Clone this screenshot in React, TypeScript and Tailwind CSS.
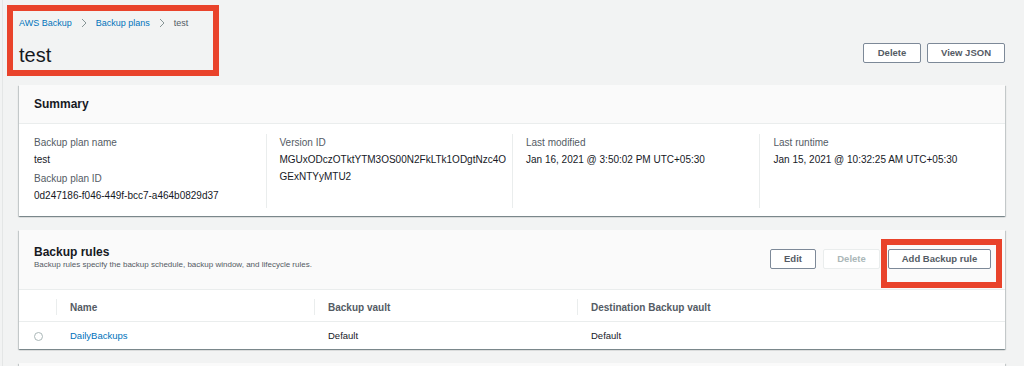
import { ReactNode } from 'react'

const cardShadow =
  'shadow-[0_1px_1px_0_rgba(0,28,36,0.3),1px_1px_1px_0_rgba(0,28,36,0.15),-1px_1px_1px_0_rgba(0,28,36,0.15)]'

function Btn({ children, disabled, className = '' }: { children: ReactNode; disabled?: boolean; className?: string }) {
  return (
    <button
      className={
        'h-[20px] rounded-[2px] border bg-white text-[9.5px] font-bold leading-none ' +
        (disabled ? 'border-[#eaeded] text-[#aab7b8] ' : 'border-[#7d8998] text-[#545b64] ') +
        className
      }
    >
      {children}
    </button>
  )
}

function Chevron() {
  return (
    <svg width="6" height="10" viewBox="0 0 6 10" className="mx-[9px]">
      <path d="M1 1l4 4-4 4" fill="none" stroke="#879596" strokeWidth="1" />
    </svg>
  )
}

function Field({ label, value }: { label: string; value: ReactNode }) {
  return (
    <div className="mb-[5px]">
      <div className="text-[10px] leading-[14px] text-[#545b64]">{label}</div>
      <div className="mt-[3px] text-[10px] leading-[14px] text-[#16191f]">{value}</div>
    </div>
  )
}

export default function App() {
  return (
    <div className="relative h-screen overflow-hidden bg-[#f2f3f3] font-['Liberation_Sans',Arial,sans-serif]">
      <div className="ml-[2px] min-h-screen border-l border-[#e4e6e6] pl-[16px] pr-[19px]">
        {/* page header */}
        <div className="flex items-start justify-between">
          <div>
            <nav className="mt-[17px] flex h-[12px] items-center text-[9px] leading-[12px]">
              <span className="text-[#0073bb]">AWS Backup</span>
              <Chevron />
              <span className="text-[#0073bb]">Backup plans</span>
              <Chevron />
              <span className="text-[#545b64]">test</span>
            </nav>
            <h1 className="mt-[14px] text-[20px] leading-[24px] text-[#16191f]">test</h1>
          </div>
          <div className="mt-[43px] flex gap-[6px]">
            <Btn className="w-[58px]">Delete</Btn>
            <Btn className="w-[78px]">View JSON</Btn>
          </div>
        </div>

        {/* summary */}
        <section className={'mt-[18px] bg-white ' + cardShadow}>
          <div className="flex h-[39px] items-center border-b border-[#eaeded] bg-[#fafafa] px-[15px]">
            <h2 className="text-[12px] font-bold text-[#16191f]">Summary</h2>
          </div>
          <div className="grid h-[92px] grid-cols-4 pt-[10px] pb-[14px]">
            <div className="pl-[15px] pt-[2px]">
              <Field label="Backup plan name" value="test" />
              <Field label="Backup plan ID" value="0d247186-f046-449f-bcc7-a464b0829d37" />
            </div>
            <div className="border-l border-[#eaeded] pl-[13px] pt-[2px]">
              <Field
                label="Version ID"
                value={
                  <>
                    <span className="block">MGUxODczOTktYTM3OS00N2FkLTk1ODgtNzc4O</span>
                    <span className="mt-[3px] block">GExNTYyMTU2</span>
                  </>
                }
              />
            </div>
            <div className="border-l border-[#eaeded] pl-[13px] pt-[2px]">
              <Field label="Last modified" value="Jan 16, 2021 @ 3:50:02 PM UTC+05:30" />
            </div>
            <div className="border-l border-[#eaeded] pl-[14px] pt-[2px]">
              <Field label="Last runtime" value="Jan 15, 2021 @ 10:32:25 AM UTC+05:30" />
            </div>
          </div>
        </section>

        {/* backup rules */}
        <section className={'mt-[14px] bg-white ' + cardShadow}>
          <div className="flex h-[60px] items-start justify-between border-b border-[#eaeded] bg-[#fafafa] pl-[15px] pr-[14px]">
            <div className="pt-[14px]">
              <h2 className="text-[12px] font-bold leading-[16px] text-[#16191f]">Backup rules</h2>
              <p className="-mt-[1px] text-[8px] leading-[11px] text-[#545b64]">
                Backup rules specify the backup schedule, backup window, and lifecycle rules.
              </p>
            </div>
            <div className="mt-[19px] flex gap-[7px]">
              <Btn className="w-[46px]">Edit</Btn>
              <Btn disabled className="w-[57px]">Delete</Btn>
              <Btn className="ml-[1px] w-[103px]">Add Backup rule</Btn>
            </div>
          </div>
          <div className="grid h-[32px] grid-cols-[37px_258px_263px_1fr] items-center border-b border-[#eaeded] pt-[3px] text-[10px] font-bold text-[#545b64]">
            <div />
            <div className="flex h-[16px] items-center border-l border-[#eaeded] pl-[13px]">Name</div>
            <div className="flex h-[16px] items-center border-l border-[#eaeded] pl-[13px]">Backup vault</div>
            <div className="flex h-[16px] items-center border-l border-[#eaeded] pl-[13px]">Destination Backup vault</div>
          </div>
          <div className="grid h-[27px] grid-cols-[37px_258px_263px_1fr] items-center pt-[2px] text-[9.5px] text-[#16191f]">
            <div className="flex justify-center pl-[2px]">
              <span className="block h-[9px] w-[9px] rounded-full border border-[#aab7b8] bg-white" />
            </div>
            <div className="pl-[14px] text-[#0073bb]">DailyBackups</div>
            <div className="pl-[14px]">Default</div>
            <div className="pl-[14px]">Default</div>
          </div>
        </section>

        {/* next card peeking */}
        <section className={'mt-[14px] h-[30px] bg-[#fafafa] ' + cardShadow} />
      </div>

      {/* annotation boxes */}
      <div className="pointer-events-none absolute left-[7px] top-[5px] h-[71px] w-[212px] border-[6px] border-[#e9432b]" />
      <div className="pointer-events-none absolute left-[881px] top-[239px] h-[49px] w-[121px] border-[6px] border-[#e9432b]" />
    </div>
  )
}
